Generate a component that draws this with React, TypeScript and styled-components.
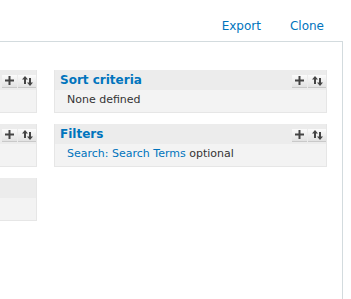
import React from "react";
import styled, { createGlobalStyle } from "styled-components";

const GlobalStyle = createGlobalStyle`
  html, body {
    margin: 0;
    padding: 0;
    background: #ffffff;
    overflow: hidden;
  }
  body {
    font-family: "DejaVu Sans", Verdana, sans-serif;
    color: #333;
  }
`;

const Page = styled.div`
  width: 351px;
  height: 299px;
  overflow: hidden;
`;

const TopBar = styled.div`
  display: flex;
  justify-content: flex-end;
  gap: 29px;
  height: 41px;
  box-sizing: border-box;
  padding: 18px 27px 0 0;
  font-size: 12px;
  line-height: 16px;
`;

const TopLink = styled.a`
  color: #0074bd;
  text-decoration: none;
`;

// the display area is wider than the window; its left part is scrolled off
const Display = styled.div`
  margin-left: -250px;
  width: 593px;
  min-height: 280px;
  box-sizing: border-box;
  border-top: 1px solid #d3dbde;
  border-right: 1px solid #d3dbde;
  padding: 28px 15px 0 14px;
  display: grid;
  grid-template-columns: 273px 273px;
  column-gap: 17px;
  align-items: start;
`;

const Column = styled.div`
  display: flex;
  flex-direction: column;
  gap: 11px;
`;

const Bucket = styled.div`
  border: 1px solid #e6e6e6;
  border-top: none;
  background: #f3f3f3;
`;

const BucketHeader = styled.div`
  display: flex;
  align-items: center;
  justify-content: space-between;
  height: 20px;
  padding: 0 0 0 5px;
  background: #ececec;
`;

const BucketTitle = styled.h3`
  margin: 0;
  font-size: 12px;
  font-weight: bold;
  line-height: 20px;
  color: #0074bd;
`;

const Buttons = styled.div`
  display: flex;
  gap: 1px;
  margin-top: 2px;
  margin-left: auto;
`;

const IconButton = styled.span<{ $w: number }>`
  display: flex;
  align-items: center;
  justify-content: center;
  width: ${(p) => p.$w}px;
  height: 12px;
  background: linear-gradient(#fbfbfb, #e2e2e2);
  border-bottom: 1px solid #c9c9c9;
`;

const BucketBody = styled.div`
  padding: 3px 12px 0;
  height: 19px;
  font-size: 11px;
  line-height: 14px;
  color: #333;
`;

const BodyLink = styled.a`
  color: #0074bd;
  text-decoration: none;
`;

function PlusIcon() {
  return (
    <svg width="9" height="9" viewBox="0 0 9 9">
      <rect x="3.5" y="0" width="2" height="9" fill="#444" />
      <rect x="0" y="3.5" width="9" height="2" fill="#444" />
    </svg>
  );
}

function SortIcon() {
  return (
    <svg width="11" height="10" viewBox="0 0 11 10">
      <path d="M3 0 L6 3.5 L4 3.5 L4 8 L2 8 L2 3.5 L0 3.5 Z" fill="#444" />
      <path d="M8 10 L5 6.5 L7 6.5 L7 2 L9 2 L9 6.5 L11 6.5 Z" fill="#444" />
    </svg>
  );
}

interface BucketProps {
  title?: string;
  buttons?: boolean;
  children?: React.ReactNode;
}

function BucketBox({ title, buttons = true, children }: BucketProps) {
  return (
    <Bucket>
      <BucketHeader>
        {title && <BucketTitle>{title}</BucketTitle>}
        {buttons && (
          <Buttons>
            <IconButton $w={15}>
              <PlusIcon />
            </IconButton>
            <IconButton $w={18}>
              <SortIcon />
            </IconButton>
          </Buttons>
        )}
      </BucketHeader>
      <BucketBody>{children}</BucketBody>
    </Bucket>
  );
}

export default function App() {
  return (
    <Page>
      <GlobalStyle />
      <TopBar>
        <TopLink href="#">Export</TopLink>
        <TopLink href="#">Clone</TopLink>
      </TopBar>
      <Display>
        <Column>
          <BucketBox />
          <BucketBox />
          <BucketBox buttons={false} />
        </Column>
        <Column>
          <BucketBox title="Sort criteria">None defined</BucketBox>
          <BucketBox title="Filters">
            <BodyLink href="#">Search: Search Terms</BodyLink> optional
          </BucketBox>
        </Column>
      </Display>
    </Page>
  );
}
